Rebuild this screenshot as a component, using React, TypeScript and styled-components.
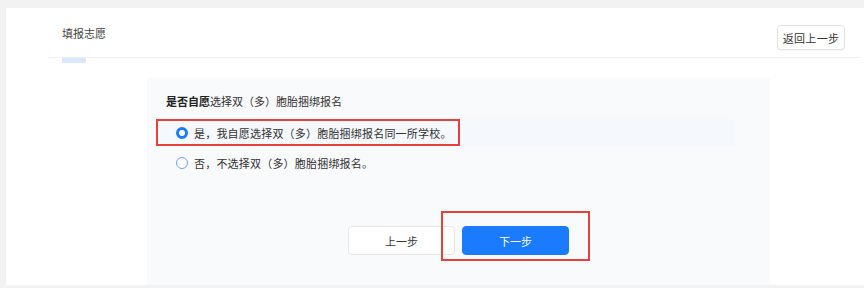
import React from "react";
import styled, { createGlobalStyle } from "styled-components";

const GlobalStyle = createGlobalStyle`
  html, body {
    margin: 0;
    padding: 0;
    background: #f2f2f2;
    font-family: "Noto Sans CJK SC", "Noto Sans", sans-serif;
    color: #333;
  }
  * { box-sizing: border-box; }
`;

const Page = styled.div`
  width: 864px;
  height: 288px;
  padding: 8px 0 3px 6px;
  overflow: hidden;
`;

const Card = styled.div`
  background: #fff;
  height: 277px;
  display: flex;
  flex-direction: column;
`;

const Header = styled.div`
  display: flex;
  justify-content: space-between;
  align-items: flex-start;
  height: 50px;
  margin: 0 4px 0 42px;
  border-bottom: 1px solid #eeeeee;
`;

const Title = styled.div`
  padding: 17px 0 0 14px;
  font-size: 11px;
  line-height: 16px;
  color: #444;
`;

const BackButton = styled.button`
  margin: 17px 15px 0 0;
  width: 68px;
  height: 25px;
  padding: 0;
  border: 1px solid #e3e3e3;
  border-radius: 4px;
  background: #fff;
  font-family: inherit;
  font-size: 11px;
  letter-spacing: 0.3px;
  color: #333;
  box-shadow: 0 1px 2px rgba(0, 0, 0, 0.04);
`;

const TabBar = styled.div`
  width: 24px;
  height: 5px;
  margin-left: 56px;
  background: #d9e6fb;
`;

const Panel = styled.div`
  margin: 15px 0 0 141px;
  width: 623px;
  flex: 1;
  background: #f9fafc;
  padding: 15px 9px 30px;
  display: flex;
  flex-direction: column;
`;

const Question = styled.div`
  padding-left: 10px;
  font-size: 11px;
  line-height: 16px;
  color: #333;

  b {
    font-weight: 700;
    color: #222;
  }
`;

const Options = styled.div`
  margin-top: 10px;
  display: flex;
  flex-direction: column;
  gap: 5px;
`;

const OptionRow = styled.div<{ $active?: boolean }>`
  width: 579px;
  display: flex;
  background: ${({ $active }) => ($active ? "#f5f8fd" : "transparent")};
`;

const OptionLabel = styled.label<{ $marked?: boolean }>`
  display: flex;
  align-items: center;
  gap: 6px;
  height: ${({ $marked }) => ($marked ? "27px" : "24px")};
  padding-left: ${({ $marked }) => ($marked ? "18px" : "20px")};
  padding-right: 6px;
  border: ${({ $marked }) => ($marked ? "2px solid #e8413b" : "none")};
  font-size: 11px;
  letter-spacing: 0.2px;
  color: #333;
`;

const Radio = styled.span<{ $checked?: boolean }>`
  width: 12px;
  height: 12px;
  border-radius: 50%;
  flex: none;
  background: #fff;
  border: ${({ $checked }) => ($checked ? "3.5px solid #1b7bff" : "1px solid #6f9ff0")};
`;

const Actions = styled.div`
  margin-top: auto;
  display: flex;
  justify-content: center;
  gap: 7px;
`;

const ActionButton = styled.button<{ $primary?: boolean }>`
  width: 107px;
  height: 29px;
  padding: 0;
  border-radius: 4px;
  border: 1px solid ${({ $primary }) => ($primary ? "#1b7bff" : "#e6e6e6")};
  background: ${({ $primary }) => ($primary ? "#1b7bff" : "#fff")};
  color: ${({ $primary }) => ($primary ? "#fff" : "#333")};
  font-family: inherit;
  font-size: 11px;
`;

const Marked = styled.div`
  position: relative;
`;

const MarkBox = styled.span`
  position: absolute;
  left: -21px;
  right: -21px;
  top: -15px;
  bottom: -6px;
  border: 2px solid #e8413b;
  pointer-events: none;
`;

export default function App() {
  return (
    <>
      <GlobalStyle />
      <Page>
        <Card>
          <Header>
            <Title>填报志愿</Title>
            <BackButton>返回上一步</BackButton>
          </Header>
          <TabBar />
          <Panel>
            <Question>
              <b>是否自愿</b>选择双（多）胞胎捆绑报名
            </Question>
            <Options>
              <OptionRow $active>
                <OptionLabel $marked>
                  <Radio $checked />
                  是，我自愿选择双（多）胞胎捆绑报名同一所学校。
                </OptionLabel>
              </OptionRow>
              <OptionRow>
                <OptionLabel>
                  <Radio />
                  否，不选择双（多）胞胎捆绑报名。
                </OptionLabel>
              </OptionRow>
            </Options>
            <Actions>
              <ActionButton>上一步</ActionButton>
              <Marked>
                <ActionButton $primary>下一步</ActionButton>
                <MarkBox />
              </Marked>
            </Actions>
          </Panel>
        </Card>
      </Page>
    </>
  );
}
